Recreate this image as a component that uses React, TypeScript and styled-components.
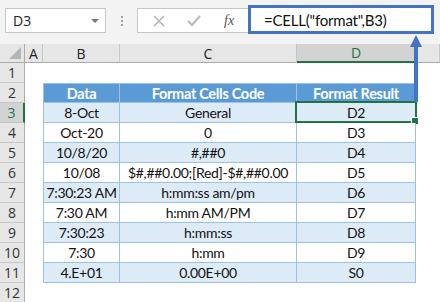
import React from "react";
import styled, { createGlobalStyle, css } from "styled-components";

const Global = createGlobalStyle`
  html, body { margin: 0; padding: 0; background: #ffffff; }
  * { box-sizing: border-box; }
`;

const Page = styled.div`
  width: 440px;
  height: 302px;
  overflow: hidden;
  position: relative;
  background: #ffffff;
  font-family: "Open Sans", "Liberation Sans", sans-serif;
`;

const TopBar = styled.div`
  height: 44px;
  background: #f3f3f3;
  display: flex;
  align-items: flex-start;
  padding-left: 5px;
`;

const NameBox = styled.div`
  margin-top: 8px;
  width: 101px;
  height: 25px;
  background: #fff;
  border: 1px solid #c6c6c6;
  display: flex;
  align-items: center;
  justify-content: space-between;
  padding: 0 6px 0 7px;
  font-size: 14px;
  color: #222;
`;

const Caret = styled.span`
  width: 0;
  height: 0;
  border-left: 4px solid transparent;
  border-right: 4px solid transparent;
  border-top: 4px solid #777;
`;

const Dots = styled.div`
  width: 31px;
  padding-top: 16px;
  display: flex;
  flex-direction: column;
  align-items: center;
  gap: 2px;
  & span {
    width: 2px;
    height: 2px;
    background: #a0a0a0;
  }
`;

const FuncBox = styled.div`
  margin-top: 8px;
  width: 111px;
  height: 25px;
  background: #fff;
  border: 1px solid #c6c6c6;
  border-right: none;
  display: flex;
  align-items: center;
  padding-left: 14px;
  gap: 20px;
`;

const Fx = styled.span`
  font-family: "Liberation Serif", serif;
  font-style: italic;
  font-size: 14px;
  color: #555;
  margin-left: 2px;
`;

const FormulaBox = styled.div`
  margin-top: 5px;
  width: 186px;
  height: 29px;
  background: #fff;
  border: 3px solid #4472c4;
  display: flex;
  align-items: center;
  padding-left: 13px;
  font-family: "Lato", "Liberation Sans", sans-serif;
  font-size: 15px;
  letter-spacing: -0.2px;
  color: #111;
`;

const Sheet = styled.div`
  display: grid;
  grid-template-columns: 25px 18px 77px 177px 119px 1fr;
  grid-template-rows: 19px repeat(12, 20px);
`;

const Corner = styled.div`
  background: #e6e6e6;
  border-right: 1px solid #ababab;
  border-bottom: 1px solid #ababab;
  position: relative;
  &::after {
    content: "";
    position: absolute;
    right: 3px;
    bottom: 3px;
    width: 0;
    height: 0;
    border-left: 12px solid transparent;
    border-bottom: 12px solid #b5b5b5;
  }
`;

const ColHead = styled.div<{ $sel?: boolean }>`
  background: ${(p) => (p.$sel ? "#d3d3d3" : "#e6e6e6")};
  border-right: 1px solid #c6c6c6;
  border-bottom: 1px solid #ababab;
  display: flex;
  align-items: center;
  justify-content: center;
  font-size: 14px;
  color: ${(p) => (p.$sel ? "#217346" : "#222")};
  ${(p) =>
    p.$sel &&
    css`
      border-bottom: 2px solid #217346;
    `}
`;

const RowHead = styled.div<{ $sel?: boolean }>`
  background: ${(p) => (p.$sel ? "#d3d3d3" : "#e6e6e6")};
  border-right: ${(p) => (p.$sel ? "2px solid #217346" : "1px solid #ababab")};
  border-bottom: 1px solid #c6c6c6;
  display: flex;
  align-items: center;
  justify-content: center;
  font-size: 14px;
  color: ${(p) => (p.$sel ? "#217346" : "#333")};
`;

const Blank = styled.div``;

const Cell = styled.div<{ $kind: "head" | "band" | "plain"; $first?: boolean; $top?: boolean }>`
  position: relative;
  display: flex;
  align-items: center;
  justify-content: center;
  white-space: nowrap;
  font-family: "Lato", "Liberation Sans", sans-serif;
  font-size: 14px;
  letter-spacing: -0.3px;
  border-right: 1px solid #9bc2e6;
  border-bottom: 1px solid #9bc2e6;
  ${(p) => p.$first && css`border-left: 1px solid #9bc2e6;`}
  ${(p) => p.$top && css`border-top: 1px solid #9bc2e6;`}
  ${(p) =>
    p.$kind === "head"
      ? css`
          background: #5b9bd5;
          color: #fff;
          font-weight: 700;
          font-size: 14.5px;
        `
      : p.$kind === "band"
      ? css`
          background: #ddebf7;
          color: #111;
        `
      : css`
          background: #fff;
          color: #111;
        `}
`;

const Selection = styled.span`
  position: absolute;
  left: -2px;
  top: -2px;
  right: -2px;
  bottom: -1px;
  border: 2px solid #217346;
  pointer-events: none;
  &::after {
    content: "";
    position: absolute;
    right: -4px;
    bottom: -4px;
    width: 6px;
    height: 6px;
    background: #217346;
    border: 1px solid #fff;
  }
`;

const Arrow = styled.svg`
  position: absolute;
  left: 0;
  top: 0;
  pointer-events: none;
`;

const rows: [string, string, string][] = [
  ["8-Oct", "General", "D2"],
  ["Oct-20", "0", "D3"],
  ["10/8/20", "#,##0", "D4"],
  ["10/08", "$#,##0.00;[Red]-$#,##0.00", "D5"],
  ["7:30:23 AM", "h:mm:ss am/pm", "D6"],
  ["7:30 AM", "h:mm AM/PM", "D7"],
  ["7:30:23", "h:mm:ss", "D8"],
  ["7:30", "h:mm", "D9"],
  ["4.E+01", "0.00E+00", "S0"],
];

export default function App() {
  return (
    <Page>
      <Global />
      <TopBar>
        <NameBox>
          D3
          <Caret />
        </NameBox>
        <Dots>
          <span />
          <span />
          <span />
        </Dots>
        <FuncBox>
          <svg width="14" height="14" viewBox="0 0 14 14">
            <path d="M2 2 L12 12 M12 2 L2 12" stroke="#b8b8b8" strokeWidth="1.6" />
          </svg>
          <svg width="16" height="14" viewBox="0 0 16 14">
            <path d="M2 7 L6 11 L14 2" stroke="#b8b8b8" strokeWidth="2" fill="none" />
          </svg>
          <Fx>fx</Fx>
        </FuncBox>
        <FormulaBox>=CELL("format",B3)</FormulaBox>
      </TopBar>
      <Sheet>
        <Corner />
        <ColHead>A</ColHead>
        <ColHead>B</ColHead>
        <ColHead>C</ColHead>
        <ColHead $sel>D</ColHead>
        <ColHead />

        <RowHead>1</RowHead>
        <Blank />
        <Blank />
        <Blank />
        <Blank />
        <Blank />

        <RowHead>2</RowHead>
        <Blank />
        <Cell $kind="head" $first $top>Data</Cell>
        <Cell $kind="head" $top>Format Cells Code</Cell>
        <Cell $kind="head" $top>Format Result</Cell>
        <Blank />

        {rows.map((r, i) => {
          const kind = i % 2 === 0 ? "band" : "plain";
          return (
            <React.Fragment key={i}>
              <RowHead $sel={i === 0}>{i + 3}</RowHead>
              <Blank />
              <Cell $kind={kind} $first>{r[0]}</Cell>
              <Cell $kind={kind}>{r[1]}</Cell>
              <Cell $kind={kind}>
                {r[2]}
                {i === 0 && <Selection />}
              </Cell>
              <Blank />
            </React.Fragment>
          );
        })}

        <RowHead>12</RowHead>
      </Sheet>
      <Arrow width="440" height="302">
        <rect x="414" y="46" width="4" height="56" fill="#4472c4" />
        <polygon points="416,35 410,47 422,47" fill="#4472c4" />
      </Arrow>
    </Page>
  );
}
